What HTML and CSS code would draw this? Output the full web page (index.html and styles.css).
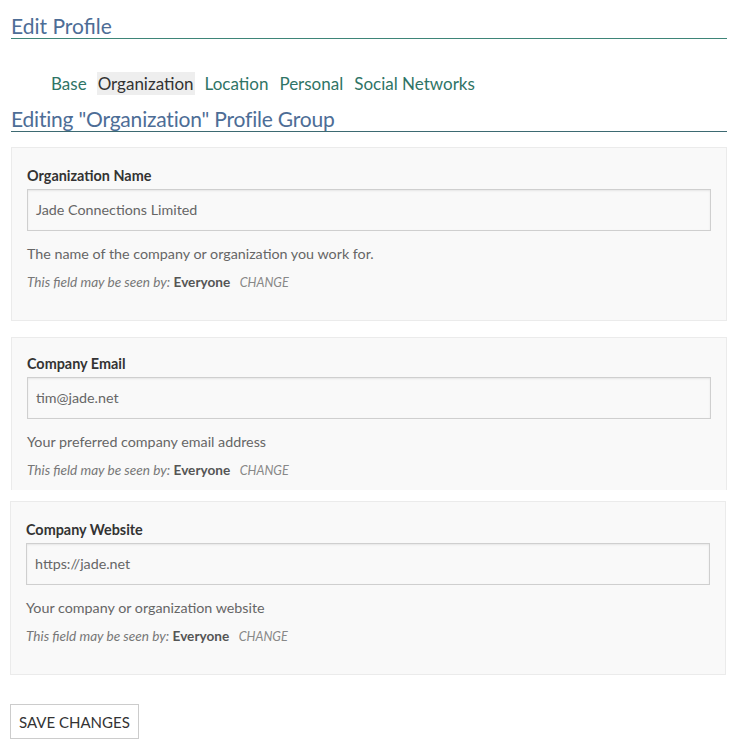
FILE: index.html
```html
<!DOCTYPE html>
<html>
<head>
<meta charset="utf-8">
<link rel="stylesheet" href="styles.css">
</head>
<body>
<div class="page">
  <h1 class="title">Edit Profile</h1>
  <ul class="tabs">
    <li><a href="#">Base</a></li>
    <li class="active"><a href="#">Organization</a></li>
    <li><a href="#">Location</a></li>
    <li><a href="#">Personal</a></li>
    <li><a href="#">Social Networks</a></li>
  </ul>
  <h2 class="title sub">Editing "Organization" Profile Group</h2>

  <div class="field">
    <label class="label">Organization Name</label>
    <div class="input">Jade Connections Limited</div>
    <p class="desc">The name of the company or organization you work for.</p>
    <p class="vis"><em>This field may be seen by:</em> <strong>Everyone</strong> <span class="change">CHANGE</span></p>
  </div>

  <div class="field cut">
    <label class="label">Company Email</label>
    <div class="input">tim@jade.net</div>
    <p class="desc">Your preferred company email address</p>
    <p class="vis"><em>This field may be seen by:</em> <strong>Everyone</strong> <span class="change">CHANGE</span></p>
  </div>

  <div class="field shifted">
    <label class="label">Company Website</label>
    <div class="input">https://jade.net</div>
    <p class="desc">Your company or organization website</p>
    <p class="vis"><em>This field may be seen by:</em> <strong>Everyone</strong> <span class="change">CHANGE</span></p>
  </div>

  <button class="save shifted">SAVE CHANGES</button>
</div>
</body>
</html>
```

FILE: styles.css
```css
html, body {
  margin: 0;
  padding: 0;
  background: #fff;
}
body {
  font-family: "Lato", "Liberation Sans", sans-serif;
  color: #333;
}
.page {
  padding: 0 13px 0 11px;
}
.title {
  font-family: "Lato", "Liberation Sans", sans-serif;
  font-weight: 400;
  font-size: 21px;
  line-height: 25px;
  color: #4d6d96;
  margin: 13px 0 0;
  border-bottom: 1px solid #3e8578;
}
.title.sub {
  margin-top: 11px;
  letter-spacing: -0.2px;
  border-bottom-color: #3d6a72;
}
.tabs {
  list-style: none;
  margin: 33px 0 0;
  padding: 0 0 0 39px;
  display: flex;
  gap: 9px;
}
.tabs li a {
  display: block;
  padding: 0 1px;
  font-size: 17px;
  line-height: 23px;
  color: #2f7466;
  text-decoration: none;
}
.tabs li.active a {
  background: #eeeeee;
  color: #333;
}
.field {
  margin-top: 15px;
  background: #f9f9f9;
  border: 1px solid #ebebeb;
  padding: 18px 15px 28px;
}
.field.cut {
  margin-top: 16px;
  padding-top: 16px;
  height: 153px;
  box-sizing: border-box;
  overflow: hidden;
  border-bottom: none;
}
.field.shifted {
  margin-top: 11px;
}
.shifted {
  margin-left: -1px;
  margin-right: 1px;
}
.label {
  display: block;
  font-size: 14.4px;
  line-height: 20px;
  font-weight: 700;
  color: #333;
}
.input {
  margin-top: 3px;
  height: 42px;
  box-sizing: border-box;
  border: 1px solid #cfcfcf;
  box-shadow: inset 0 1px 2px rgba(0,0,0,0.08);
  background: #f9f9f9;
  padding: 0 8px;
  font-size: 14.3px;
  line-height: 40px;
  color: #666;
}
.desc {
  margin: 13px 0 0;
  font-size: 14.3px;
  line-height: 20px;
  color: #666;
}
.vis {
  margin: 8px 0 0;
  height: 20px;
  font-size: 13.6px;
  line-height: 20px;
  color: #777;
}
.vis em,
.vis strong,
.vis span {
  line-height: 1;
}
.vis strong {
  color: #555;
  font-weight: 700;
}
.vis .change {
  font-style: italic;
  font-size: 12.6px;
  color: #888;
  margin-left: 6px;
}
.save {
  display: block;
  margin-top: 29px;
  height: 35px;
  padding: 0 8px;
  background: #fff;
  border: 1px solid #cccccc;
  font-family: "Lato", "Liberation Sans", sans-serif;
  font-size: 15px;
  color: #333;
  cursor: pointer;
}
```
